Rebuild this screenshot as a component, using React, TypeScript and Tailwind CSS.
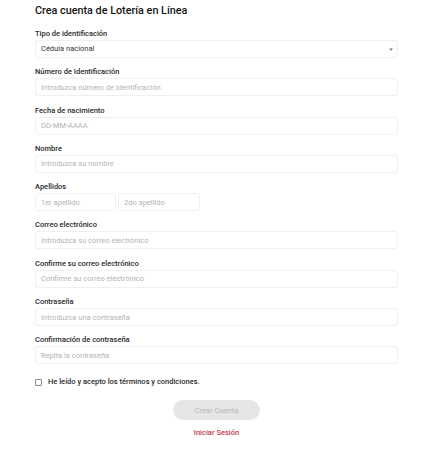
const font = { fontFamily: "Roboto, 'Noto Sans', sans-serif" };

function Field({ label, children }: { label: string; children: React.ReactNode }) {
  return (
    <div className="flex flex-col gap-px">
      <label className="h-[10px] text-[7.5px] leading-[10px] font-medium text-[#2a2a2a]">{label}</label>
      {children}
    </div>
  );
}

function TextInput({ placeholder, className = "w-full" }: { placeholder: string; className?: string }) {
  return (
    <input
      type="text"
      placeholder={placeholder}
      className={`${className} h-[18px] rounded-[3px] border border-[#f0f0f0] bg-white px-[5px] text-[7.5px] text-[#333] placeholder:text-[#b3b3b3] outline-none`}
    />
  );
}

export default function App() {
  return (
    <div className="min-h-[453px] bg-white" style={font}>
      <div className="flex w-[398px] flex-col pl-[35px] pt-[3px]">
        <h1 className="h-[16px] text-[10.8px] leading-[16px] font-medium text-[#151515]">Crea cuenta de Lotería en Línea</h1>

        <div className="mt-[10px] flex flex-col gap-[9.3px]">
          <Field label="Tipo de identificación">
            <div className="flex h-[18px] w-full items-center justify-between rounded-[3px] border border-[#f0f0f0] bg-white pl-[5px] pr-[4px]">
              <span className="text-[7.5px] text-[#333]">Cédula nacional</span>
              <svg width="4" height="3" viewBox="0 0 4 3">
                <path d="M0 0.5 L4 0.5 L2 2.8 Z" fill="#777" />
              </svg>
            </div>
          </Field>
          <Field label="Número de Identificación">
            <TextInput placeholder="Introduzca número de identificación" />
          </Field>
          <Field label="Fecha de nacimiento">
            <TextInput placeholder="DD-MM-AAAA" />
          </Field>
          <Field label="Nombre">
            <TextInput placeholder="Introduzca su nombre" />
          </Field>
          <Field label="Apellidos">
            <div className="flex gap-[2px]">
              <TextInput placeholder="1er apellido" className="w-[81px]" />
              <TextInput placeholder="2do apellido" className="w-[82px]" />
            </div>
          </Field>
          <Field label="Correo electrónico">
            <TextInput placeholder="Introduzca su correo electrónico" />
          </Field>
          <Field label="Confirme su correo electrónico">
            <TextInput placeholder="Confirme su correo electrónico" />
          </Field>
          <Field label="Contraseña">
            <TextInput placeholder="Introduzca una contraseña" />
          </Field>
          <Field label="Confirmación de contraseña">
            <TextInput placeholder="Repita la contraseña" />
          </Field>
        </div>

        <label className="mt-[13px] flex items-center gap-[6px]">
          <span className="h-[7px] w-[7px] rounded-[1px] border border-[#8a8a8a] bg-white" />
          <span className="text-[7.5px] leading-[10px] font-medium text-[#2a2a2a]">He leído y acepto los términos y condiciones.</span>
        </label>

        <div className="mt-[13px] flex flex-col items-center">
          <button className="h-[20px] w-[87px] rounded-full bg-[#e6e6e6] text-[7.5px] text-[#b8b8b8]">Crear Cuenta</button>
          <a className="mt-[8px] text-[7.5px] leading-[10px] font-medium text-[#c23a4c]">Iniciar Sesión</a>
        </div>
      </div>
    </div>
  );
}
